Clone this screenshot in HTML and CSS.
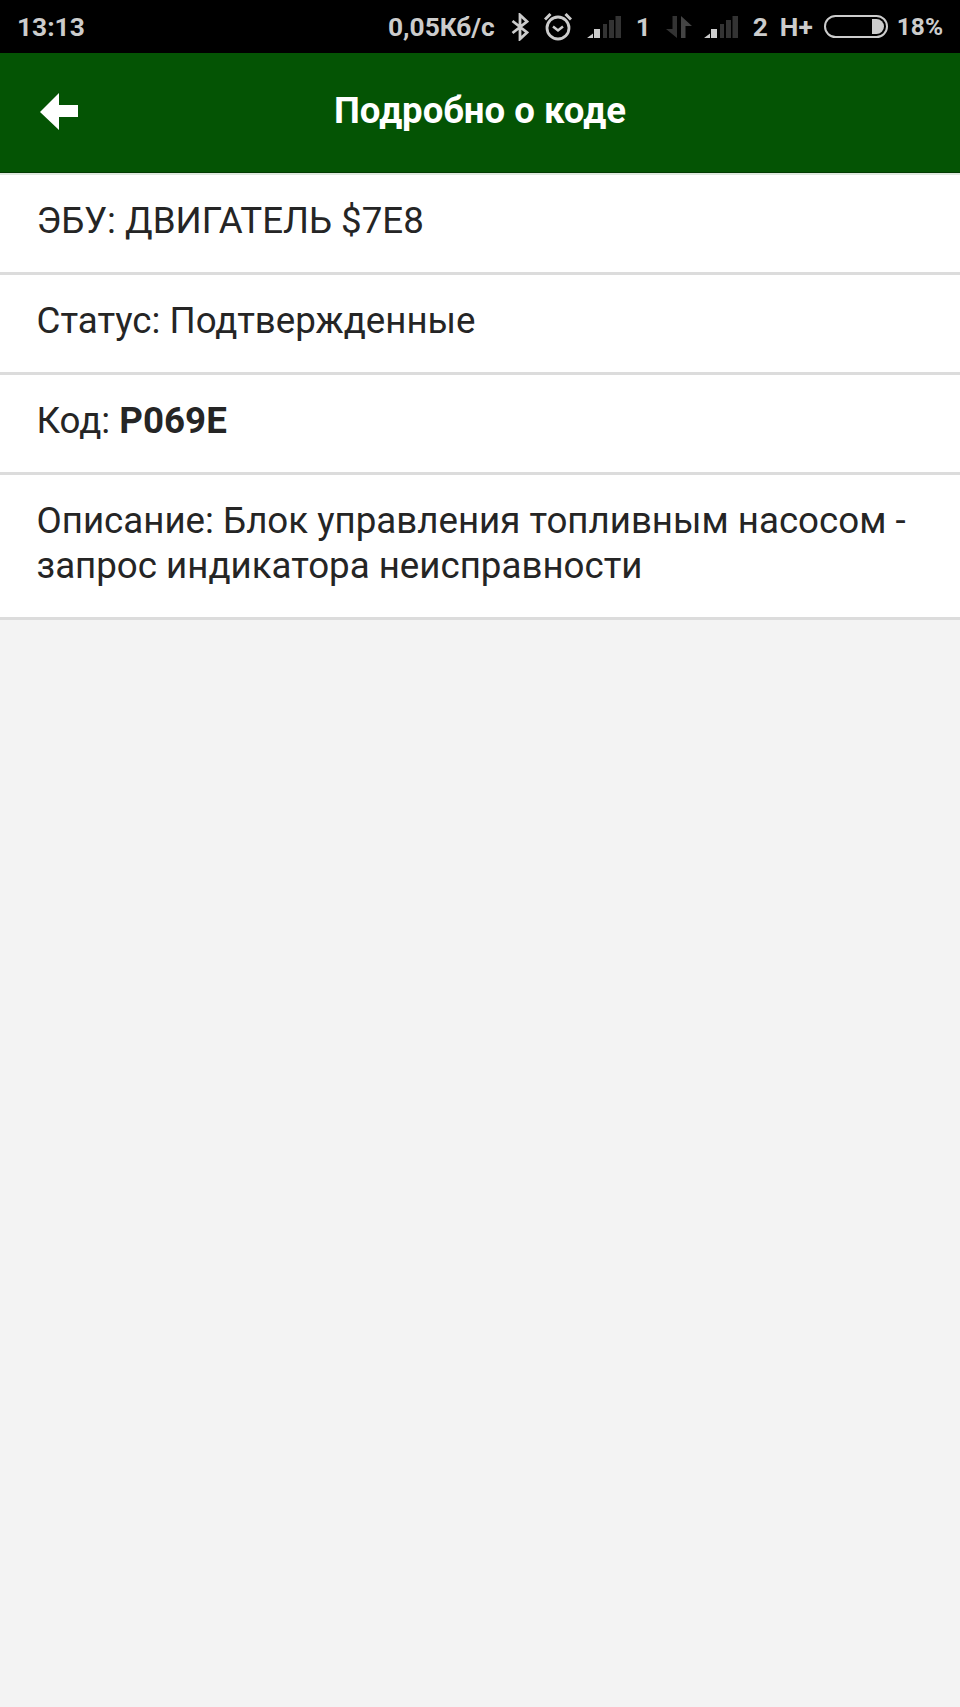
FILE: index.html
```html
<!DOCTYPE html>
<html lang="en">
<head>
    <meta charset="UTF-8">
    <meta name="viewport" content="width=device-width, initial-scale=1.0">
    <title>Подробно о коде</title>
    <link rel="stylesheet" href="styles.css">
</head>
<body>
    <div class="status-bar">
        <span class="time">13:13</span>
        <div class="status-right">
            <span class="speed">0,05Кб/с</span>
            <svg class="bt" width="18" height="28" viewBox="0 0 18 28"><path d="M1.500 8 L16 19.500 L9 26 V2 L16 8.500 L1.500 20" fill="none" stroke="#ccc" stroke-width="2.800"/></svg>
            <svg class="alarm" width="28" height="28" viewBox="0 0 28 28"><circle cx="14" cy="15" r="11" fill="none" stroke="#ccc" stroke-width="2.800"/><path d="M9 13.500 L14 17.500 L19 13.500" fill="none" stroke="#ccc" stroke-width="2.500"/><path d="M1 6.500 L6.500 1 M27 6.500 L21.500 1" fill="none" stroke="#ccc" stroke-width="3"/></svg>
            <svg class="signal" width="34" height="22" viewBox="0 0 34 22"><path d="M0 22 L6 17.500 V22 Z M7 13 H13 V22 H7 Z" fill="#ccc"/><path d="M16 8 H20 V22 H16 Z M22 4 H27 V22 H22 Z M28.500 0 H34 V22 H28.500 Z" fill="#333"/></svg>
            <span class="sim">1</span>
            <svg class="arrows" width="26" height="22" viewBox="0 0 26 22"><path d="M0 13 H6.500 V0 H11 V22 Z" fill="#333"/><path d="M15 22 V0 L26 10 H19.500 V22 Z" fill="#444"/></svg>
            <svg class="signal signal-two" width="34" height="22" viewBox="0 0 34 22"><path d="M0 22 L6 17.500 V22 Z M7 13 H13 V22 H7 Z" fill="#ccc"/><path d="M16 8 H20 V22 H16 Z M22 4 H27 V22 H22 Z M28.500 0 H34 V22 H28.500 Z" fill="#333"/></svg>
            <span class="sim">2</span>
            <span class="net">H+</span>
            <div class="battery"><div class="battery-fill"></div></div>
            <span class="percent">18%</span>
        </div>
    </div>

    <div class="header">
        <svg class="back" width="38" height="38" viewBox="0 0 38 38"><path d="M0 19 L19 0 V12 H38 V24 H19 V37 Z" fill="#fff"/></svg>
        <h1>Подробно о коде</h1>
    </div>

    <div class="list">
        <div class="row">ЭБУ: ДВИГАТЕЛЬ $7E8</div>
        <div class="row">Статус: Подтвержденные</div>
        <div class="row">Код: <b>P069E</b></div>
        <div class="row">Описание: Блок управления топливным насосом - запрос индикатора неисправности</div>
    </div>
</body>
</html>
```

FILE: styles.css
```css
* {
    margin: 0;
    padding: 0;
    box-sizing: border-box;
    font-family: Roboto, sans-serif;
}
body {
    background: #f3f3f3;
    width: 960px;
    height: 1707px;
    overflow: hidden;
}
.status-bar {
    background: #000;
    height: 53px;
    display: flex;
    justify-content: space-between;
    align-items: center;
    padding: 0 17px;
    color: #ccc;
    font-size: 26.3px;
    font-weight: 700;
}
.status-right {
    display: flex;
    align-items: center;
}
.bt {
    margin-left: 16px;
}
.alarm {
    margin-left: 15px;
}
.signal {
    margin-left: 15px;
}
.signal-two {
    margin-left: 12px;
}
.sim {
    margin-left: 15px;
}
.arrows {
    margin-left: 15px;
}
.net {
    margin-left: 12px;
}
.battery {
    margin-left: 11px;
    width: 64px;
    height: 23px;
    border: 2px solid #ccc;
    border-radius: 12px;
    padding: 2px;
    display: flex;
    justify-content: flex-end;
}
.battery-fill {
    width: 12px;
    background: #ccc;
    border-radius: 0 8px 8px 0;
}
.percent {
    margin-left: 9px;
    font-size: 24.5px;
}
.header {
    background: #045404;
    height: 120px;
    padding-bottom: 5px;
    display: flex;
    align-items: center;
    justify-content: center;
    position: relative;
    border-bottom: 1px solid #033a03;
}
.back {
    position: absolute;
    left: 40px;
    top: 40px;
}
.header h1 {
    color: #fff;
    font-size: 36.6px;
    font-weight: 700;
}
.list {
    border-top: 2px solid #dfe8df;
}
.row {
    background: #fff;
    border-bottom: 3px solid #dcdcdc;
    padding: 23px 36.5px 29px;
    font-size: 36.7px;
    line-height: 45px;
    color: #252525;
}
```
